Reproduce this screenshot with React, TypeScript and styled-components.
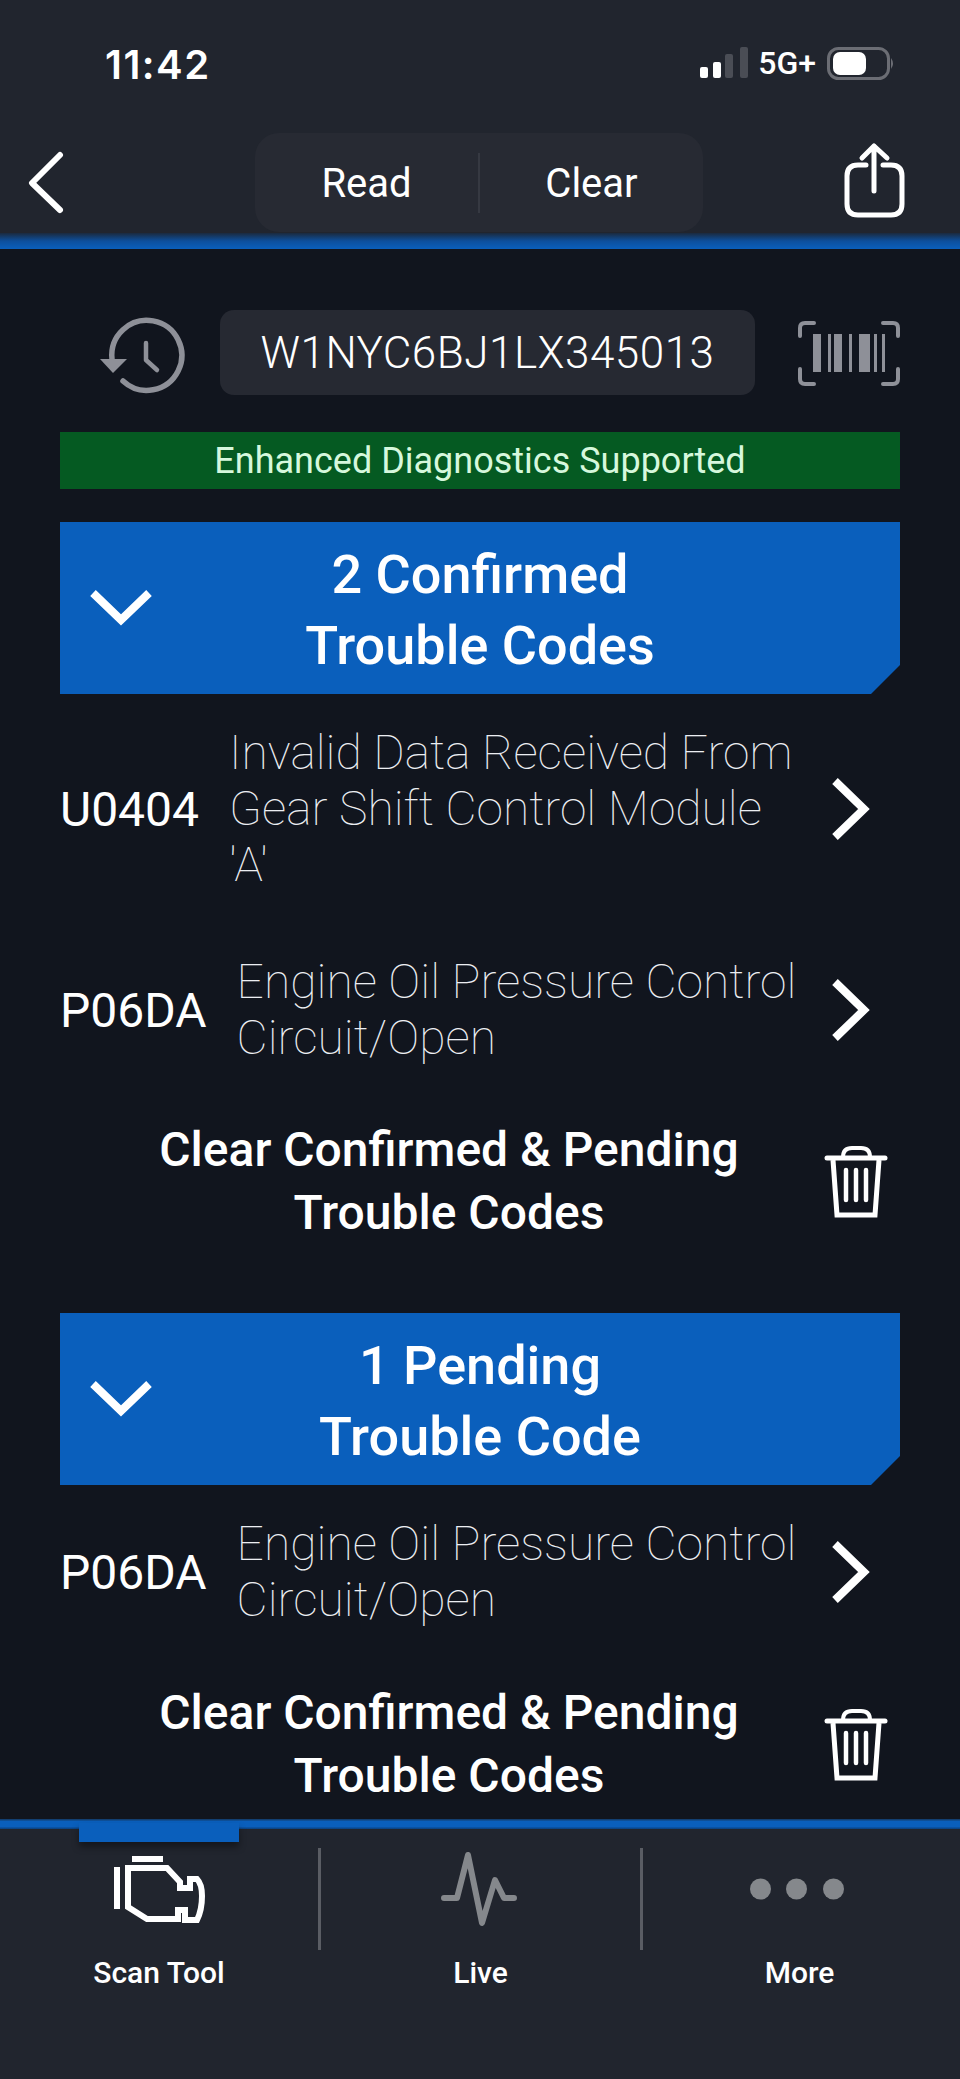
import React from 'react';
import styled, { createGlobalStyle } from 'styled-components';

const colors = {
  bar: '#21252e',
  body: '#11151e',
  field: '#262932',
  blue: '#0a5fbc',
  green: '#055a22',
  greenText: '#d6f8dd',
  grey: '#8e9098',
  white: '#ffffff',
};

const GlobalStyle = createGlobalStyle`
  html, body {
    margin: 0;
    padding: 0;
    background: ${colors.body};
  }
  * {
    box-sizing: border-box;
  }
`;

const Page = styled.div`
  width: 960px;
  height: 2079px;
  display: flex;
  flex-direction: column;
  overflow: hidden;
  background: ${colors.body};
  color: ${colors.white};
  font-family: Roboto, 'Liberation Sans', sans-serif;
`;

const TopBar = styled.header`
  background: ${colors.bar};
`;

const StatusRow = styled.div`
  height: 128px;
  padding: 40px 64px 0 105px;
  display: flex;
  justify-content: space-between;
  align-items: flex-start;
`;

const Clock = styled.span`
  font-family: Inter, Roboto, sans-serif;
  font-size: 40px;
  font-weight: 600;
  line-height: 50px;
  letter-spacing: 1.5px;
`;

const StatusIcons = styled.div`
  display: flex;
  align-items: center;
  height: 50px;
  margin-top: -2px;
`;

const Carrier = styled.span`
  font-size: 32px;
  font-weight: 500;
  line-height: 50px;
  margin: 0 11px 0 10px;
`;

const NavRow = styled.div`
  height: 105px;
  display: grid;
  grid-template-columns: 227px 448px 1fr;
  align-items: start;
  padding: 5px 54px 0 28px;
`;

const NavButton = styled.button<{ $end?: boolean }>`
  background: none;
  border: 0;
  padding: 0;
  margin: 0;
  display: flex;
  justify-content: ${p => (p.$end ? 'flex-end' : 'flex-start')};
  color: ${colors.white};
`;

const Segmented = styled.div`
  height: 99px;
  display: grid;
  grid-template-columns: 1fr 2px 1fr;
  align-items: center;
  background: #272a33;
  border-radius: 24px;
`;

const SegmentLabel = styled.span`
  font-size: 40px;
  font-weight: 400;
  text-align: center;
  padding-top: 2px;
`;

const SegmentDivider = styled.span`
  height: 60px;
  background: #363942;
`;

const TopRule = styled.div`
  height: 16px;
  flex-shrink: 0;
  background: linear-gradient(180deg, #1b2a3e 0%, #0d4f9c 50%, ${colors.blue} 100%);
`;

const BottomRule = styled.div`
  height: 10px;
  flex-shrink: 0;
  background: linear-gradient(180deg, #14375f 0%, ${colors.blue} 25%, ${colors.blue} 75%, #0b3f7c 100%);
`;

const Content = styled.main`
  flex: 1;
  min-height: 0;
  padding: 0 60px;
`;

const VinRow = styled.div`
  margin-top: 61px;
  height: 85px;
  display: flex;
  align-items: center;
`;

const VinField = styled.div`
  width: 535px;
  height: 85px;
  margin-left: 20px;
  flex-shrink: 0;
  display: flex;
  align-items: center;
  justify-content: center;
  background: ${colors.field};
  border-radius: 14px;
  font-size: 44px;
  font-weight: 300;
  letter-spacing: 0.5px;
`;

const IconSlot = styled.svg<{ $offset?: number }>`
  flex-shrink: 0;
  display: block;
  margin-left: ${p => p.$offset ?? 0}px;
`;

const SupportBanner = styled.div`
  margin-top: 37px;
  height: 57px;
  display: flex;
  align-items: center;
  justify-content: center;
  background: ${colors.green};
  color: ${colors.greenText};
  font-size: 36px;
  font-weight: 400;
`;

const SectionHeader = styled.div<{ $gap: number }>`
  margin-top: ${p => p.$gap}px;
  height: 172px;
  display: grid;
  grid-template-columns: 120px 1fr 120px;
  align-items: center;
  background: ${colors.blue};
  clip-path: polygon(0 0, 100% 0, 100% 143px, 811px 100%, 0 100%);
`;

const SectionTitle = styled.h2`
  margin: 0;
  padding-top: 3px;
  font-size: 54px;
  font-weight: 500;
  line-height: 71px;
  text-align: center;
`;

const CodeRow = styled.div<{ $gap: number }>`
  margin-top: ${p => p.$gap}px;
  display: flex;
  align-items: center;
  padding-right: 28px;
`;

const CodeName = styled.span`
  font-size: 48px;
  font-weight: 400;
  flex-shrink: 0;
  margin-right: 30px;
`;

const CodeText = styled.span`
  width: 570px;
  flex-shrink: 0;
  font-size: 48px;
  font-weight: 100;
  line-height: 56px;
  color: #eceef2;
`;

const RowChevron = styled.svg`
  flex-shrink: 0;
  display: block;
  margin-left: auto;
`;

const ClearRow = styled.div<{ $gap: number }>`
  margin-top: ${p => p.$gap}px;
  display: flex;
  align-items: center;
  padding-right: 10px;
`;

const ClearLabel = styled.div`
  flex: 1;
  min-width: 0;
  font-size: 48px;
  font-weight: 500;
  line-height: 63px;
  text-align: center;
`;

const BottomBar = styled.nav`
  flex-shrink: 0;
  height: 250px;
  background: ${colors.bar};
`;

const Tabs = styled.div`
  display: grid;
  grid-template-columns: 318px 3px 319px 3px 313px;
`;

const Tab = styled.div`
  display: flex;
  flex-direction: column;
  align-items: center;
`;

const TabMarker = styled.div<{ $active?: boolean }>`
  width: 160px;
  height: 19px;
  margin-top: -6px;
  background: ${p => (p.$active ? colors.blue : 'transparent')};
  box-shadow: ${p => (p.$active ? '0 5px 7px rgba(0, 0, 0, 0.4)' : 'none')};
`;

const TabIcon = styled.div`
  height: 110px;
  margin-top: -12px;
`;

const TabLabel = styled.span`
  font-size: 30px;
  font-weight: 500;
  line-height: 36px;
  margin-top: 15px;
`;

const TabDivider = styled.div`
  height: 102px;
  margin-top: 19px;
  background: #5a5d64;
`;

const SignalIcon = () => (
  <svg width="48" height="32" viewBox="0 0 48 32">
    <rect x="0" y="20" width="8" height="11" rx="2" fill={colors.white} />
    <rect x="13" y="15" width="8" height="16" rx="2" fill={colors.white} />
    <rect x="25" y="7" width="8" height="24" rx="2" fill="#4a4d55" />
    <rect x="40" y="0" width="8" height="31" rx="2" fill="#4a4d55" />
  </svg>
);

const BatteryIcon = () => (
  <svg width="69" height="33" viewBox="0 0 69 33">
    <rect x="1.5" y="1.5" width="60" height="30" rx="10" fill="none" stroke="#6b6d74" strokeWidth="3" />
    <rect x="6" y="5" width="33" height="23" rx="7" fill={colors.white} />
    <path d="M64 11 Q68 16.5 64 22 Z" fill="#6b6d74" />
  </svg>
);

const BackIcon = () => (
  <svg width="40" height="84" viewBox="0 0 40 84" fill="none" stroke={colors.white} strokeWidth="6" strokeLinecap="round" strokeLinejoin="round">
    <path d="M32 22 L4 50 L32 77" />
  </svg>
);

const ShareIcon = () => (
  <svg width="62" height="86" viewBox="0 0 62 86" fill="none" stroke={colors.white} strokeWidth="5" strokeLinecap="round" strokeLinejoin="round">
    <path d="M22 32 H14 Q3 32 3 43 V71 Q3 82 14 82 H47 Q58 82 58 71 V43 Q58 32 47 32 H39" />
    <path d="M30 58 V13 M18 25 L30 13 L43 25" />
  </svg>
);

const HistoryIcon = () => (
  <IconSlot width="110" height="100" viewBox="0 0 110 100" fill="none" stroke={colors.grey} $offset={30}>
    <path d="M22 56 A35 35 0 1 1 33 78" strokeWidth="5.5" strokeLinecap="round" />
    <path d="M10 56 H37 L23 70 Z" fill={colors.grey} stroke="none" />
    <path d="M56 40 V57 L67 67" strokeWidth="4.5" strokeLinecap="round" strokeLinejoin="round" />
  </IconSlot>
);

const barcodeBars = [
  [33, 8],
  [48, 3],
  [54, 8],
  [69, 3],
  [79, 11],
  [94, 3],
  [102, 3],
];

const BarcodeIcon = () => (
  <IconSlot width="116" height="80" viewBox="10 14 116 80" fill="none" stroke={colors.grey} strokeWidth="4" strokeLinecap="round" $offset={35}>
    <path d="M34 24 H25 Q20 24 20 29 V37" />
    <path d="M103 24 H113 Q118 24 118 29 V37" />
    <path d="M20 70 V80 Q20 85 25 85 H34" />
    <path d="M118 70 V80 Q118 85 113 85 H103" />
    {barcodeBars.map(([x, w]) => (
      <rect key={x} x={x} y="35" width={w} height="38" fill={colors.grey} stroke="none" />
    ))}
  </IconSlot>
);

const ChevronDown = () => (
  <IconSlot width="68" height="40" viewBox="0 0 68 40" fill="none" stroke={colors.white} strokeWidth="8" $offset={27}>
    <path d="M6 5 L34 32 L62 5" />
  </IconSlot>
);

const ChevronRight = () => (
  <RowChevron width="44" height="66" viewBox="0 0 44 66" fill="none" stroke={colors.white} strokeWidth="8">
    <path d="M7 5 L36 33 L7 61" />
  </RowChevron>
);

const TrashIcon = () => (
  <IconSlot width="68" height="78" viewBox="22 18 68 78" fill="none" stroke={colors.white} $offset={-16}>
    <path d="M43 33 Q43 24 52 24 H61 Q70 24 70 33" strokeWidth="4" />
    <path d="M27 34 H85" strokeWidth="5" strokeLinecap="round" />
    <path d="M33 36 L37 91 H75 L79 36" strokeWidth="5" />
    <path d="M46 46 V76 M56 46 V76 M66 46 V76" strokeWidth="4.5" strokeLinecap="round" />
  </IconSlot>
);

const EngineIcon = () => (
  <svg width="150" height="110" viewBox="-6 0 150 110" fill="none" stroke={colors.white} strokeWidth="6">
    <path d="M27 37 V79 M42 29 H73" />
    <path d="M38 38 H77 L90 52 V58 H100 V49 H107 Q112 54 112 66 Q112 80 107 90 H95 V80 H88 V89 H57 L38 77 Z" />
  </svg>
);

const PulseIcon = () => (
  <svg width="150" height="110" viewBox="0 0 150 110" fill="none" stroke="#85888c" strokeWidth="6" strokeLinecap="round" strokeLinejoin="round">
    <path d="M38 68 H51 L62 25 L76 93 L89 50 L98 68 H108" />
  </svg>
);

const DotsIcon = () => (
  <svg width="150" height="110" viewBox="0 0 150 110" fill="#85888c">
    <circle cx="35.5" cy="59" r="10.5" />
    <circle cx="71.5" cy="59" r="10.5" />
    <circle cx="108.5" cy="59" r="10.5" />
  </svg>
);

const ClearCodes = ({ gap }: { gap: number }) => (
  <ClearRow $gap={gap}>
    <ClearLabel>
      Clear Confirmed &amp; Pending
      <br />
      Trouble Codes
    </ClearLabel>
    <TrashIcon />
  </ClearRow>
);

const App: React.FC = () => (
  <Page>
    <GlobalStyle />
    <TopBar>
      <StatusRow>
        <Clock>11:42</Clock>
        <StatusIcons>
          <SignalIcon />
          <Carrier>5G+</Carrier>
          <BatteryIcon />
        </StatusIcons>
      </StatusRow>
      <NavRow>
        <NavButton aria-label="Back">
          <BackIcon />
        </NavButton>
        <Segmented>
          <SegmentLabel>Read</SegmentLabel>
          <SegmentDivider />
          <SegmentLabel>Clear</SegmentLabel>
        </Segmented>
        <NavButton $end aria-label="Share">
          <ShareIcon />
        </NavButton>
      </NavRow>
    </TopBar>
    <TopRule />
    <Content>
      <VinRow>
        <HistoryIcon />
        <VinField>W1NYC6BJ1LX345013</VinField>
        <BarcodeIcon />
      </VinRow>
      <SupportBanner>Enhanced Diagnostics Supported</SupportBanner>

      <SectionHeader $gap={33}>
        <ChevronDown />
        <SectionTitle>
          2 Confirmed
          <br />
          Trouble Codes
        </SectionTitle>
      </SectionHeader>
      <CodeRow $gap={31}>
        <CodeName>U0404</CodeName>
        <CodeText>Invalid Data Received From Gear Shift Control Module 'A'</CodeText>
        <ChevronRight />
      </CodeRow>
      <CodeRow $gap={61}>
        <CodeName>P06DA</CodeName>
        <CodeText>Engine Oil Pressure Control Circuit/Open</CodeText>
        <ChevronRight />
      </CodeRow>
      <ClearCodes gap={52} />

      <SectionHeader $gap={69}>
        <ChevronDown />
        <SectionTitle>
          1 Pending
          <br />
          Trouble Code
        </SectionTitle>
      </SectionHeader>
      <CodeRow $gap={31}>
        <CodeName>P06DA</CodeName>
        <CodeText>Engine Oil Pressure Control Circuit/Open</CodeText>
        <ChevronRight />
      </CodeRow>
      <ClearCodes gap={53} />
    </Content>
    <BottomRule />
    <BottomBar>
      <Tabs>
        <Tab>
          <TabMarker $active />
          <TabIcon>
            <EngineIcon />
          </TabIcon>
          <TabLabel>Scan Tool</TabLabel>
        </Tab>
        <TabDivider />
        <Tab>
          <TabMarker />
          <TabIcon>
            <PulseIcon />
          </TabIcon>
          <TabLabel>Live</TabLabel>
        </Tab>
        <TabDivider />
        <Tab>
          <TabMarker />
          <TabIcon>
            <DotsIcon />
          </TabIcon>
          <TabLabel>More</TabLabel>
        </Tab>
      </Tabs>
    </BottomBar>
  </Page>
);

export default App;
